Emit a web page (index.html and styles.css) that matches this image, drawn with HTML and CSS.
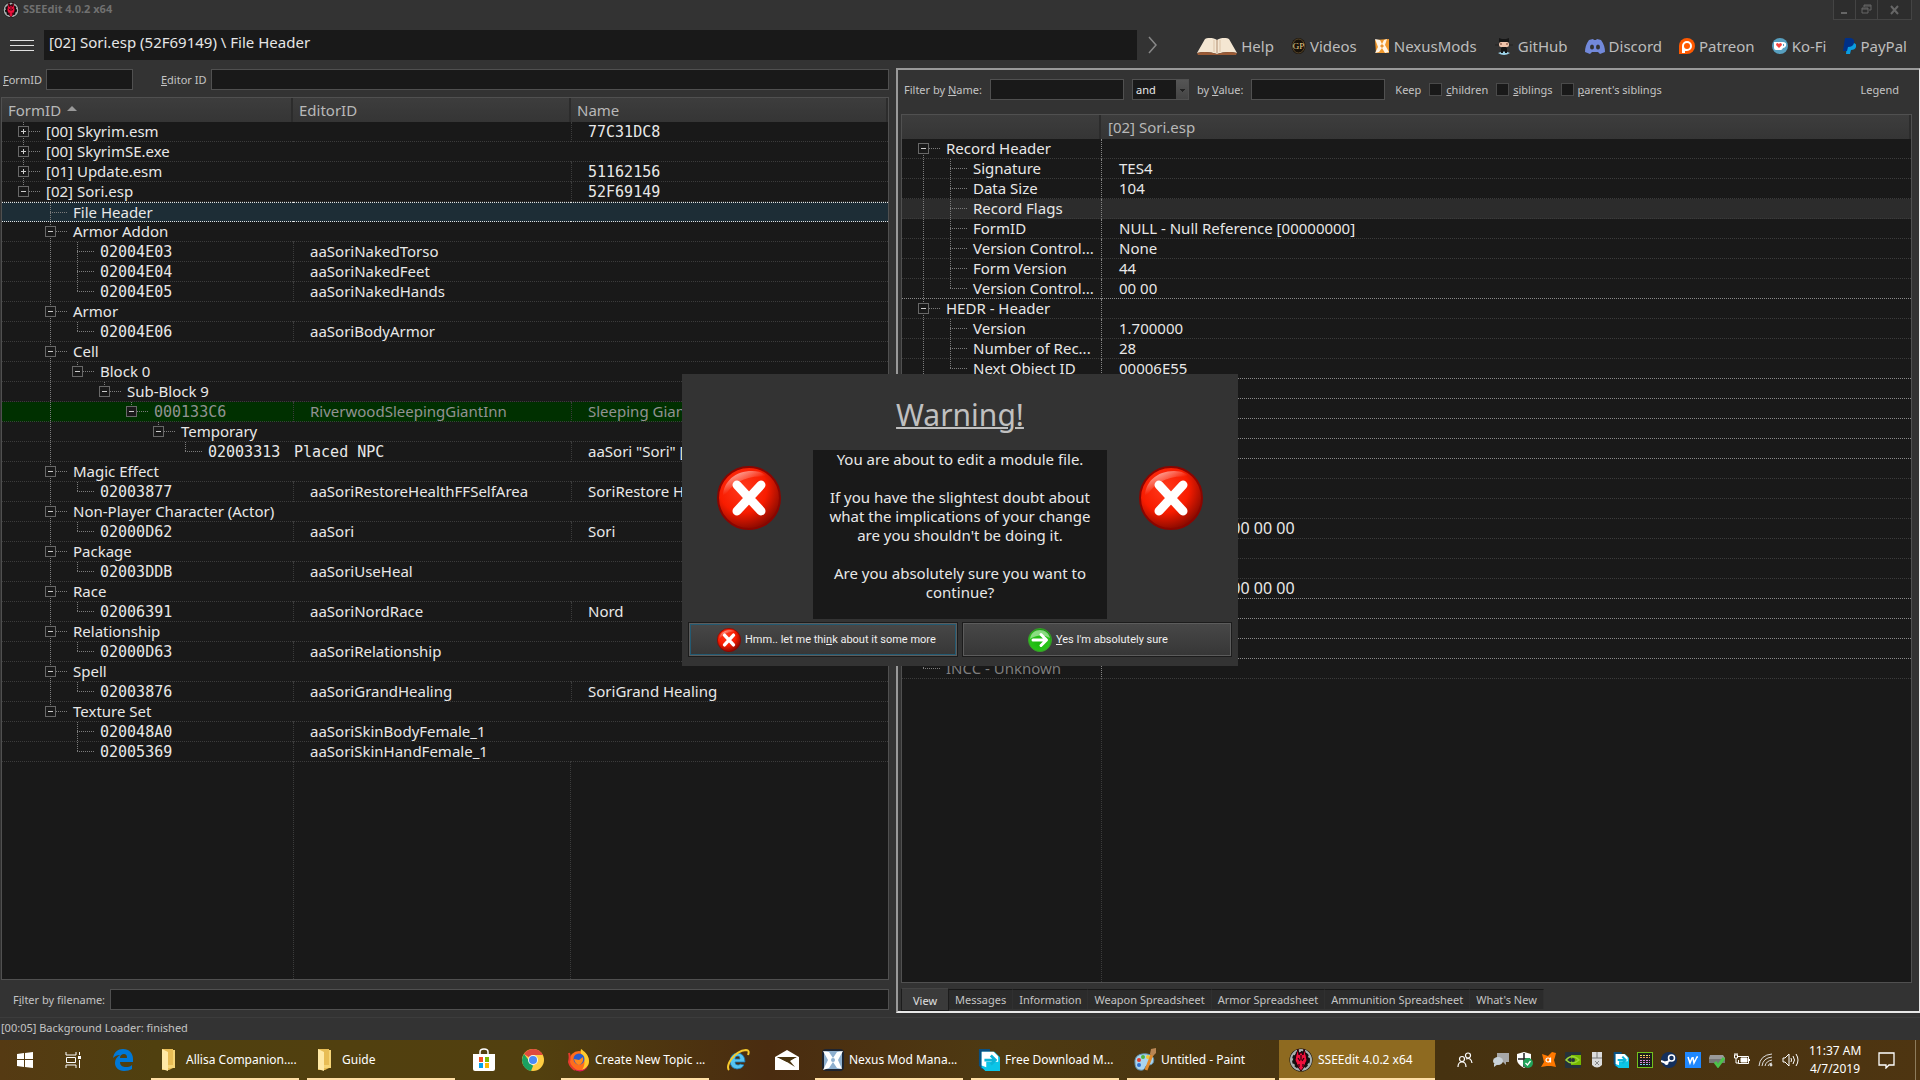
FILE: index.html
```html
<!DOCTYPE html>
<html lang="en">
<head>
<meta charset="utf-8">
<title>SSEEdit 4.0.2 x64</title>
<link rel="stylesheet" href="styles.css">
</head>
<body>
<svg class="defs" aria-hidden="true">
  <defs>
    <radialGradient id="red" cx="40%" cy="35%" r="70%"><stop offset="0" stop-color="#ff3a1c"/><stop offset=".55" stop-color="#f81c00"/><stop offset="1" stop-color="#7c0800"/></radialGradient>
    <linearGradient id="shine" x1="0" y1="0" x2=".6" y2=".8"><stop offset="0" stop-color="#fff" stop-opacity=".85"/><stop offset=".7" stop-color="#fff" stop-opacity="0"/></linearGradient>
    <radialGradient id="green" cx="45%" cy="60%" r="65%"><stop offset="0" stop-color="#19b80c"/><stop offset=".7" stop-color="#2cc41d"/><stop offset="1" stop-color="#0b7d05"/></radialGradient>
  </defs>
  <symbol id="i-error" viewBox="0 0 64 64">
    <circle cx="32" cy="32" r="31" fill="url(#red)" stroke="#8a0500" stroke-width="2"/>
    <path d="M6 33C5 16 18 5 35 5c8 0 13 3 16 6C32 8 14 16 6 33z" fill="url(#shine)"/>
    <path d="M20 19l24 26M44 19L20 45" stroke="#fff" stroke-width="9" stroke-linecap="round"/>
  </symbol>
  <symbol id="i-go" viewBox="0 0 24 24">
    <circle cx="12" cy="12" r="11.5" fill="url(#green)" stroke="#3a9a2c"/>
    <path d="M2 11C3 5 7 2 12 2s9 3 10 8C15 6 8 7 2 11z" fill="#fff" opacity=".45"/>
    <path d="M5 12h13M13 6.500l5.500 5.500-5.500 5.500" fill="none" stroke="#fff" stroke-width="3" stroke-linecap="round" stroke-linejoin="round"/>
  </symbol>
  <symbol id="i-sse" viewBox="0 0 24 24">
    <circle cx="12" cy="12" r="11.500" fill="#111"/>
    <circle cx="12" cy="12" r="9.500" fill="none" stroke="#a9b0b0" stroke-width="3"/>
    <circle cx="12" cy="12" r="7.500" fill="none" stroke="#111" stroke-width="3" stroke-dasharray="3 2"/>
    <path d="M9 1l1 6 2-3 2 3 1-6 2 6 1 5-3 7-3 4-3-4-3-7 1-5z" fill="#f0103c" stroke="#220008"/>
    <path d="M12 7v5M9 10l2 3M15 10l-2 3M10 16v3M14 16v3" stroke="#220008" stroke-width="1.200"/>
  </symbol>
  <symbol id="i-folder" viewBox="0 0 16 24"><path d="M1 1h11v19l-4 2H1z" fill="#e8bd55"/><path d="M1 1l6 3v19l-6-2z" fill="#ffe9a6"/><path d="M12 2h2v18H7v-3h5z" fill="#f6d576"/></symbol>
  <symbol id="i-fdm" viewBox="0 0 24 24"><path d="M1 0h12v22H4l-3-4z" fill="#0a4f80"/><path d="M4 3h14l6 6v15H8l-4-4z" fill="#0bc5e8"/><path d="M4 3h13l5 5v6H9v6l-5-2z" fill="#fff"/><path d="M7 12h12M14 7l5 5-5 5" fill="none" stroke="#0bb4d8" stroke-width="3"/></symbol>
  <symbol id="i-nexus" viewBox="0 0 16 16"><path d="M1 2l14-1v14L2 15z" fill="#f0982c"/><path d="M1 1l5 1 2 4 2-4 3-1-2 6 4 7-4 1-3-5-3 4-4 1 3-6z" fill="#fff4e4"/><path d="M6 8l2-2 2 2-2 2z" fill="#e8912d"/></symbol>
</svg>

<main class="app">
  <header class="titlebar">
    <svg class="i16"><use href="#i-sse"/></svg>
    <h1>SSEEdit 4.0.2 x64</h1>
    <div class="winctl">
      <button type="button" aria-label="Minimize"><svg width="10" height="10"><path d="M1 8h6" stroke="#666" stroke-width="2"/></svg></button>
      <button type="button" aria-label="Restore"><svg width="11" height="11"><path d="M3 3V1h7v5H8M1 4h6v5H1zM1 5h6M3 2h7" fill="none" stroke="#666"/></svg></button>
      <button type="button" class="wide" aria-label="Close"><svg width="10" height="10"><path d="M1 1l7 8M8 1L1 9" stroke="#666" stroke-width="2"/></svg></button>
    </div>
  </header>

  <nav class="toolbar">
    <button type="button" class="menu" aria-label="Menu"><span></span><span></span><span></span></button>
    <input class="path" aria-label="Path" value="[02] Sori.esp (52F69149) \ File Header" readonly>
    <button type="button" class="next" aria-label="Forward"><svg width="10" height="18"><path d="M1 1l7 8-7 8" fill="none" stroke="#888" stroke-width="1.500"/></svg></button>
    <div class="links">
      <a href="#help"><svg width="40" height="17" viewBox="0 0 40 17"><path d="M8 1C12-1 17 0 20 2c3-2 8-3 12-1l8 14c-7-2-14-1-20 1-6-2-13-3-20-1z" fill="#f4e6d2"/><path d="M0 15c7-2 14-1 20 1 6-2 13-3 20-1l-1 2H1z" fill="#9a5a35"/><path d="M20 2v13" stroke="#b08d70"/><path d="M17 2v12M23 2v12" stroke="#dcc3a7"/></svg>Help</a>
      <a href="#videos"><svg width="15" height="16" viewBox="0 0 15 16"><ellipse cx="7.500" cy="8" rx="7" ry="8" fill="#17110a"/><ellipse cx="7.500" cy="8" rx="6" ry="7" fill="none" stroke="#5b4829"/><text x="7.500" y="11" text-anchor="middle" class="gp">GP</text></svg>Videos</a>
      <a href="#nexus"><svg class="i16"><use href="#i-nexus"/></svg>NexusMods</a>
      <a href="#github"><svg width="20" height="17" viewBox="0 0 20 17"><path d="M5 0l3 1h4l3-1v7H5z" fill="#161616"/><rect x="5" y="4" width="10" height="5" rx="2" fill="#efc4ab"/><path d="M7 5v2M13 5v2" stroke="#6b3b2b"/><path d="M1 7h4M15 7h4" stroke="#222"/><path d="M8 9h4l1 6H7z" fill="#141414"/><path d="M4 15q6-3 12 0-6 4-12 0z" fill="#9ed4ea"/><path d="M8 10v5M12 10v5" stroke="#141414" stroke-width="2"/></svg>GitHub</a>
      <a href="#discord"><svg width="20" height="15" viewBox="0 0 20 15"><path d="M4 1L8 0l1 1h2l1-1 4 1c3 4 4 8 4 12l-5 2-2-2H7l-2 2-5-2C0 9 1 5 4 1z" fill="#7289da"/><ellipse cx="7" cy="8" rx="2" ry="2.500" fill="#333"/><ellipse cx="13" cy="8" rx="2" ry="2.500" fill="#333"/></svg>Discord</a>
      <a href="#patreon"><svg class="i16" viewBox="0 0 16 16"><path d="M0 8a8 8 0 1 1 8 8H0z" fill="#ff5900"/><path d="M3 15V8a5 5 0 1 1 5 5H6v2z" fill="#fff"/><circle cx="8" cy="8" r="3" fill="#ff5900"/></svg>Patreon</a>
      <a href="#kofi"><svg class="i16" viewBox="0 0 16 16"><circle cx="8" cy="8" r="8" fill="#579fbf"/><path d="M2 4h9q4 0 3 4-1 2-3 2-1 2-2 2H4q-2 0-2-2z" fill="#fff"/><path d="M11 6h1v2h-1z" fill="#579fbf"/><path d="M7 10L4 7q0-2 1.500-2L7 6l1-1q2 0 2 2z" fill="#f5433f"/></svg>Ko-Fi</a>
      <a href="#paypal"><svg width="13" height="16" viewBox="0 0 13 16"><path d="M4 5h7q3 1 2 4-1 3-5 3l-1 4H3z" fill="#0a9de0"/><path d="M2 0h6q4 1 3 5-1 4-6 4l-1 4H0z" fill="#003087"/></svg>PayPal</a>
    </div>
  </nav>

  <div class="panes">
    <section class="left">
      <form class="search">
        <label for="formid"><u>F</u>ormID</label><input id="formid" class="field short">
        <label for="editorid" class="gapl"><u>E</u>ditor ID</label><input id="editorid" class="field grow">
      </form>
      <div class="tree nav-tree">
        <table>
          <thead><tr><th>FormID <i class="sort"></i></th><th>EditorID</th><th>Name</th></tr></thead>
          <tbody>
            <tr><td><div class="node"><span class="g v x"><button type="button" class="plus" aria-label="Expand"></button></span>[00] Skyrim.esm</div></td><td></td><td class="mono">77C31DC8</td></tr>
            <tr><td><div class="node"><span class="g v x"><button type="button" class="plus" aria-label="Expand"></button></span>[00] SkyrimSE.exe</div></td><td></td><td></td></tr>
            <tr><td><div class="node"><span class="g v x"><button type="button" class="plus" aria-label="Expand"></button></span>[01] Update.esm</div></td><td></td><td class="mono">51162156</td></tr>
            <tr><td><div class="node"><span class="g e x"><button type="button" aria-label="Collapse"></button></span>[02] Sori.esp</div></td><td></td><td class="mono">52F69149</td></tr>
            <tr class="selected"><td><div class="node"><span class="g"></span><span class="g v x"></span>File Header</div></td><td></td><td></td></tr>
            <tr><td><div class="node"><span class="g"></span><span class="g v x"><button type="button" aria-label="Collapse"></button></span>Armor Addon</div></td><td></td><td></td></tr>
            <tr><td><div class="node mono"><span class="g"></span><span class="g v"></span><span class="g v x"></span>02004E03</div></td><td>aaSoriNakedTorso</td><td></td></tr>
            <tr><td><div class="node mono"><span class="g"></span><span class="g v"></span><span class="g v x"></span>02004E04</div></td><td>aaSoriNakedFeet</td><td></td></tr>
            <tr><td><div class="node mono"><span class="g"></span><span class="g v"></span><span class="g e x"></span>02004E05</div></td><td>aaSoriNakedHands</td><td></td></tr>
            <tr><td><div class="node"><span class="g"></span><span class="g v x"><button type="button" aria-label="Collapse"></button></span>Armor</div></td><td></td><td></td></tr>
            <tr><td><div class="node mono"><span class="g"></span><span class="g v"></span><span class="g e x"></span>02004E06</div></td><td>aaSoriBodyArmor</td><td></td></tr>
            <tr><td><div class="node"><span class="g"></span><span class="g v x"><button type="button" aria-label="Collapse"></button></span>Cell</div></td><td></td><td></td></tr>
            <tr><td><div class="node"><span class="g"></span><span class="g v"></span><span class="g e x"><button type="button" aria-label="Collapse"></button></span>Block 0</div></td><td></td><td></td></tr>
            <tr><td><div class="node"><span class="g"></span><span class="g v"></span><span class="g"></span><span class="g e x"><button type="button" aria-label="Collapse"></button></span>Sub-Block 9</div></td><td></td><td></td></tr>
            <tr class="override"><td><div class="node mono"><span class="g"></span><span class="g v"></span><span class="g"></span><span class="g"></span><span class="g e x"><button type="button" aria-label="Collapse"></button></span>000133C6</div></td><td>RiverwoodSleepingGiantInn</td><td>Sleeping Giant Inn</td></tr>
            <tr><td><div class="node"><span class="g"></span><span class="g v"></span><span class="g"></span><span class="g"></span><span class="g"></span><span class="g e x"><button type="button" aria-label="Collapse"></button></span>Temporary</div></td><td></td><td></td></tr>
            <tr><td><div class="node mono"><span class="g"></span><span class="g v"></span><span class="g"></span><span class="g"></span><span class="g"></span><span class="g"></span><span class="g e x"></span>02003313</div></td><td class="mono placed">Placed NPC</td><td>aaSori "Sori" [NPC_:02000D62]</td></tr>
            <tr><td><div class="node"><span class="g"></span><span class="g v x"><button type="button" aria-label="Collapse"></button></span>Magic Effect</div></td><td></td><td></td></tr>
            <tr><td><div class="node mono"><span class="g"></span><span class="g v"></span><span class="g e x"></span>02003877</div></td><td>aaSoriRestoreHealthFFSelfArea</td><td>SoriRestore Health</td></tr>
            <tr><td><div class="node"><span class="g"></span><span class="g v x"><button type="button" aria-label="Collapse"></button></span>Non-Player Character (Actor)</div></td><td></td><td></td></tr>
            <tr><td><div class="node mono"><span class="g"></span><span class="g v"></span><span class="g e x"></span>02000D62</div></td><td>aaSori</td><td>Sori</td></tr>
            <tr><td><div class="node"><span class="g"></span><span class="g v x"><button type="button" aria-label="Collapse"></button></span>Package</div></td><td></td><td></td></tr>
            <tr><td><div class="node mono"><span class="g"></span><span class="g v"></span><span class="g e x"></span>02003DDB</div></td><td>aaSoriUseHeal</td><td></td></tr>
            <tr><td><div class="node"><span class="g"></span><span class="g v x"><button type="button" aria-label="Collapse"></button></span>Race</div></td><td></td><td></td></tr>
            <tr><td><div class="node mono"><span class="g"></span><span class="g v"></span><span class="g e x"></span>02006391</div></td><td>aaSoriNordRace</td><td>Nord</td></tr>
            <tr><td><div class="node"><span class="g"></span><span class="g v x"><button type="button" aria-label="Collapse"></button></span>Relationship</div></td><td></td><td></td></tr>
            <tr><td><div class="node mono"><span class="g"></span><span class="g v"></span><span class="g e x"></span>02000D63</div></td><td>aaSoriRelationship</td><td></td></tr>
            <tr><td><div class="node"><span class="g"></span><span class="g v x"><button type="button" aria-label="Collapse"></button></span>Spell</div></td><td></td><td></td></tr>
            <tr><td><div class="node mono"><span class="g"></span><span class="g v"></span><span class="g e x"></span>02003876</div></td><td>aaSoriGrandHealing</td><td>SoriGrand Healing</td></tr>
            <tr><td><div class="node"><span class="g"></span><span class="g e x"><button type="button" aria-label="Collapse"></button></span>Texture Set</div></td><td></td><td></td></tr>
            <tr><td><div class="node mono"><span class="g"></span><span class="g"></span><span class="g v x"></span>020048A0</div></td><td>aaSoriSkinBodyFemale_1</td><td></td></tr>
            <tr><td><div class="node mono"><span class="g"></span><span class="g"></span><span class="g e x"></span>02005369</div></td><td>aaSoriSkinHandFemale_1</td><td></td></tr>
          </tbody>
        </table>
        <div class="rest"><span></span><span></span><span></span></div>
      </div>
      <form class="filename">
        <label for="fname">F<u>i</u>lter by filename:</label><input id="fname" class="field grow">
      </form>
    </section>

    <section class="right">
      <form class="filters">
        <label for="byname">Filter by <u>N</u>ame:</label><input id="byname" class="field mid">
        <select aria-label="Operator" class="field"><option>and</option></select>
        <label for="byvalue">by <u>V</u>alue:</label><input id="byvalue" class="field mid">
        <span class="keep">Keep</span>
        <label class="check"><input type="checkbox"><span><u>c</u>hildren</span></label>
        <label class="check"><input type="checkbox"><span><u>s</u>iblings</span></label>
        <label class="check"><input type="checkbox"><span><u>p</u>arent's siblings</span></label>
        <span class="legend">Legend</span>
      </form>
      <div class="tree view-tree">
        <table>
          <thead><tr><th></th><th>[02] Sori.esp</th></tr></thead>
          <tbody>
            <tr><td><div class="node"><span class="g s x"><button type="button" aria-label="Collapse"></button></span>Record Header</div></td><td></td></tr>
            <tr><td><div class="node"><span class="g v"></span><span class="g v x"></span>Signature</div></td><td>TES4</td></tr>
            <tr><td><div class="node"><span class="g v"></span><span class="g v x"></span>Data Size</div></td><td>104</td></tr>
            <tr class="hot"><td><div class="node"><span class="g v"></span><span class="g v x"></span>Record Flags</div></td><td></td></tr>
            <tr><td><div class="node"><span class="g v"></span><span class="g v x"></span>FormID</div></td><td>NULL - Null Reference [00000000]</td></tr>
            <tr><td><div class="node"><span class="g v"></span><span class="g v x"></span>Version Control...</div></td><td>None</td></tr>
            <tr><td><div class="node"><span class="g v"></span><span class="g v x"></span>Form Version</div></td><td>44</td></tr>
            <tr class="strong"><td><div class="node"><span class="g v"></span><span class="g e x"></span>Version Control...</div></td><td>00 00</td></tr>
            <tr><td><div class="node"><span class="g v x"><button type="button" aria-label="Collapse"></button></span>HEDR - Header</div></td><td></td></tr>
            <tr><td><div class="node"><span class="g v"></span><span class="g v x"></span>Version</div></td><td>1.700000</td></tr>
            <tr><td><div class="node"><span class="g v"></span><span class="g v x"></span>Number of Rec...</div></td><td>28</td></tr>
            <tr class="strong"><td><div class="node"><span class="g v"></span><span class="g e x"></span>Next Object ID</div></td><td>00006E55</td></tr>
            <tr class="strong"><td></td><td></td></tr>
            <tr class="strong"><td></td><td></td></tr>
            <tr class="strong"><td></td><td></td></tr>
            <tr class="strong"><td></td><td></td></tr>
            <tr><td></td><td></td></tr>
            <tr><td></td><td></td></tr>
            <tr><td></td><td></td></tr>
            <tr class="bytes"><td></td><td>00 00 00 00 00 00 00 00</td></tr>
            <tr><td></td><td></td></tr>
            <tr><td></td><td></td></tr>
            <tr class="strong bytes"><td></td><td>00 00 00 00 00 00 00 00</td></tr>
            <tr class="strong"><td></td><td></td></tr>
            <tr class="strong"><td></td><td></td></tr>
            <tr class="strong"><td></td><td></td></tr>
            <tr class="dim"><td><div class="node"><span class="g e x"></span>INCC - Unknown</div></td><td></td></tr>
          </tbody>
        </table>
        <div class="rest"><span></span><span></span></div>
      </div>
      <div class="tabs" role="tablist">
        <button type="button" role="tab" aria-selected="true">View</button>
        <button type="button" role="tab">Messages</button>
        <button type="button" role="tab">Information</button>
        <button type="button" role="tab">Weapon Spreadsheet</button>
        <button type="button" role="tab">Armor Spreadsheet</button>
        <button type="button" role="tab">Ammunition Spreadsheet</button>
        <button type="button" role="tab">What's New</button>
      </div>
    </section>
  </div>

  <footer class="status">[00:05] Background Loader: finished</footer>

  <div class="overlay">
    <div class="dialog" role="dialog" aria-labelledby="warn">
      <h2 id="warn">Warning!</h2>
      <div class="message">
        <svg class="big"><use href="#i-error"/></svg>
        <div class="text">
          <p>You are about to edit a module file.</p>
          <p>If you have the slightest doubt about<br>what the implications of your change<br>are you shouldn't be doing it.</p>
          <p>Are you absolutely sure you want to<br>continue?</p>
        </div>
        <svg class="big"><use href="#i-error"/></svg>
      </div>
      <div class="actions">
        <button type="button" class="default"><svg class="i24"><use href="#i-error"/></svg><span>Hmm.. let me thi<u>n</u>k about it some more</span></button>
        <button type="button"><svg class="i24"><use href="#i-go"/></svg><span><u>Y</u>es I'm absolutely sure</span></button>
      </div>
    </div>
  </div>
</main>

<footer class="taskbar">
  <button type="button" class="pin" aria-label="Start"><svg width="16" height="16"><path d="M0 2l7-1v6H0zM8 1l8-1v7H8zM0 8h7v7l-7-1zM8 8h8v8l-8-1z" fill="#fff"/></svg></button>
  <button type="button" class="pin" aria-label="Task View"><svg width="17" height="16"><path d="M1 0v3h10V0M1 16v-3h10v3M1.500 5.500h9v5h-9zM14.500 0v3M14.500 8v8" fill="none" stroke="#fff"/><path d="M13 4h3v3h-3z" fill="#fff"/></svg></button>
  <button type="button" class="pin" aria-label="Edge"><svg width="20" height="22" viewBox="0 0 20 22"><path d="M0 9C1 3 5 0 10 0c6 0 10 4 10 10v3H7c0 4 3 5 6 5 2 0 4 0 6-2v4c-2 1-5 2-8 2-6 0-9-4-9-8 0-4 2-6 5-8-3 0-5 1-7 3zm7 0h7c0-3-1-4-3-4S7 6 7 9z" fill="#0078d7"/></svg></button>
  <button type="button" class="task dir"><svg width="16" height="24"><use href="#i-folder"/></svg><span>Allisa Companion....</span></button>
  <button type="button" class="task dir"><svg width="16" height="24"><use href="#i-folder"/></svg><span>Guide</span></button>
  <button type="button" class="pin" aria-label="Store"><svg width="22" height="24"><path d="M7 7V4q0-3 4-3t4 3v3" fill="none" stroke="#fff" stroke-width="1.500"/><path d="M0 6h22v15q0 2-2 2H2q-2 0-2-2z" fill="#fff"/><path d="M6 9h4v5H6z" fill="#f25022"/><path d="M12 9h4v5h-4z" fill="#7fba00"/><path d="M6 15h4v5H6z" fill="#00a4ef"/><path d="M12 15h4v5h-4z" fill="#ffb900"/></svg></button>
  <button type="button" class="pin" aria-label="Chrome"><svg width="22" height="22"><circle cx="11" cy="11" r="11" fill="#ffcd42"/><path d="M11 11L2 5a11 11 0 0 1 19 1H11z" fill="#de4b3e"/><path d="M2 5l6 8 3 4-2 5A11 11 0 0 1 2 5z" fill="#1aa260"/><circle cx="11" cy="11" r="5" fill="#f4f4f4"/><circle cx="11" cy="11" r="4" fill="#4a8af4"/></svg></button>
  <button type="button" class="task"><svg width="22" height="24"><circle cx="11" cy="13" r="10" fill="#ff6d1c"/><path d="M13 1c3 2 8 6 8 12 0 5-4 8-7 9 2-3 4-8 1-13-2-3-3-5-2-8z" fill="#ffcb2d"/><path d="M4 19c5 5 12 4 16-1-3 7-12 7-16 1z" fill="#e21b5a"/><path d="M1 5c1 3 1 5 0 9 1 4 3 6 6 8" fill="none" stroke="#e93a2e" stroke-width="2"/><circle cx="11" cy="11" r="5.500" fill="#2a5ccc"/><path d="M6 11l5 1 4-3q1 6-4 8-4-1-5-6z" fill="#ff8a1c"/></svg><span>Create New Topic ...</span></button>
  <button type="button" class="pin" aria-label="Internet Explorer"><svg width="24" height="24"><path d="M18 17q-2 4-7 4-7-1-7-8 1-8 8-8 7 1 7 9H9q0 3 3 3 2 0 2-1zM9 11h5q0-3-2-3-3 0-3 3z" fill="#56c4f0" stroke="#1b7ab5" stroke-width=".800"/><path d="M3 22C-1 18 8 3 20 2q4 0 2 5" fill="none" stroke="#f7c92c" stroke-width="2"/></svg></button>
  <button type="button" class="pin" aria-label="Mail"><svg width="24" height="20"><path d="M0 7l12-7 12 7v13H0z" fill="#fff"/><path d="M2 7h20l-10 5z" fill="#4a3410"/><path d="M2 7l10 5 8 5-5-6 6-4z" fill="#4a3410"/></svg></button>
  <button type="button" class="task"><svg width="22" height="22"><rect width="22" height="22" rx="4" fill="#1e2430"/><rect x="2" y="2" width="18" height="18" rx="2" fill="#8fb0cf"/><path d="M1 2l6 1 4 6 4-6 6-1-5 9 4 9-5-1-4-6-4 6-6 2 5-10z" fill="#fff"/><circle cx="11" cy="11" r="2" fill="#8fb0cf"/></svg><span>Nexus Mod Mana...</span></button>
  <button type="button" class="task"><svg width="22" height="24"><use href="#i-fdm"/></svg><span>Free Download M...</span></button>
  <button type="button" class="task"><svg width="22" height="24"><path d="M1 15C0 8 6 5 13 6c6 1 8 5 6 9-2 3-5 1-7 3-1 2-2 5-6 4-3 0-5-3-5-7z" fill="#a9d4ee" stroke="#5e8fb0"/><circle cx="5" cy="12" r="2" fill="#e13c2e"/><circle cx="9" cy="9" r="2" fill="#4db33f"/><circle cx="14" cy="9" r="2" fill="#f4c430"/><circle cx="5" cy="17" r="2" fill="#2d6fd0"/><path d="M19 4l-7 18" stroke="#e08a2b" stroke-width="3"/><path d="M17 1l5-1v5l-3 3-3-2z" fill="#b98552"/></svg><span>Untitled - Paint</span></button>
  <button type="button" class="task active"><svg width="24" height="24"><use href="#i-sse"/></svg><span>SSEEdit 4.0.2 x64</span></button>

  <div class="tray">
    <svg class="people" width="16" height="16" fill="none" stroke="#fff" stroke-width="1.200"><circle cx="5" cy="7" r="2.500"/><path d="M1 15q0-5 4-5t4 5"/><circle cx="11" cy="3.500" r="2.500"/><path d="M9 7q5-2 6 4"/></svg>
    <svg width="16" height="16"><path d="M4 1h12v9h-3v3l-3-3H4z" fill="#a8a8a8"/><ellipse cx="5" cy="9" rx="5" ry="4" fill="#c9d2d8"/><path d="M1 12v3l4-3z" fill="#c9d2d8"/></svg>
    <svg width="16" height="16"><path d="M7 0l7 2v6q0 4-7 8-7-4-7-8V2z" fill="#fff"/><path d="M7 1v14M1 7h12" stroke="#222" stroke-width="1.500"/><circle cx="11" cy="11" r="5" fill="#22a45a"/><path d="M8.500 11l2 2 3-4" fill="none" stroke="#fff" stroke-width="1.300"/></svg>
    <svg width="16" height="16"><path d="M1 2l6 2 4-4 4 1-1 4-1 3 2 7-5-1-4 0-6 1 3-5z" fill="#ff7800"/><circle cx="7" cy="8" r="2" fill="none" stroke="#fff" stroke-width="1.200"/><path d="M9.500 5.500v5" stroke="#fff" stroke-width="1.200"/></svg>
    <svg width="16" height="16"><rect width="16" height="16" rx="1" fill="#26323a"/><path d="M6 3h10v10H6z" fill="#76b900"/><path d="M1 8q6-7 13 0-7 6-13 0z" fill="none" stroke="#9ad43a" stroke-width="1.500"/><circle cx="8" cy="8" r="2" fill="#26323a"/></svg>
    <svg width="16" height="16"><path d="M3 0h10v13q-5 5-10 0z" fill="#dcdcdc"/><path d="M8 0v6M3 6h10" stroke="#777"/><path d="M6 9l4 4M10 9l-4 4" stroke="#888"/></svg>
    <svg width="16" height="16"><use href="#i-fdm"/></svg>
    <svg width="16" height="16"><rect x=".500" y=".500" width="15" height="15" fill="#1c1c1c" stroke="#71c21c"/><path d="M3 3.500h10" stroke="#f2e45c" stroke-dasharray="2 1"/><path d="M3 5.500h10" stroke="#f0a05c" stroke-dasharray="2 1"/><path d="M3 8.500h10M3 10.500h10" stroke="#d58ae0" stroke-dasharray="2 1"/><path d="M3 12.500h10" stroke="#79d2f0" stroke-dasharray="2 1"/></svg>
    <svg width="16" height="16"><circle cx="8" cy="8" r="8" fill="#14305c"/><circle cx="10.500" cy="6" r="3" fill="none" stroke="#fff" stroke-width="1.500"/><path d="M0 9l5 2 4-3" fill="none" stroke="#fff" stroke-width="2"/><circle cx="5.500" cy="11" r="2" fill="#fff"/></svg>
    <svg width="16" height="16"><path d="M0 0h16v16H0z" fill="#1e88ff"/><path d="M3 5l2 6 2-5h1l1 5 3-6h1M8 5v2" fill="none" stroke="#fff" stroke-width="1.500"/></svg>
    <svg width="16" height="16"><path d="M1 3h13l2 3v5H0V6z" fill="#9a9a9a"/><path d="M0 7h16v4H0z" fill="#777"/><path d="M6 10l3 4 6-8" fill="none" stroke="#4cc24a" stroke-width="3"/></svg>
    <svg width="17" height="16" fill="none" stroke="#fff"><path d="M5 4.500h10.500v7H5.500V8M16.500 7v2M1 3h4M1.500 3v3h3V3M3 6v5h3M2 1v2M4 1v2"/><path d="M8 6h6v4H8z" fill="#fff"/></svg>
    <svg width="16" height="16" fill="none" stroke="#ddd"><path d="M1 14Q2 3 14 2M4 14Q5 6 14 5M7 14q1-5 7-6M10 14q1-3 4-3"/><circle cx="13" cy="13" r="1" fill="#fff"/></svg>
    <svg width="17" height="16" fill="none" stroke="#fff"><path d="M1 6h2l4-4v12l-4-4H1zM9 6q1 2 0 4M11 4q3 4 0 8M14 2q4 6 0 12"/></svg>
    <time>11:37 AM<br>4/7/2019</time>
    <svg class="note" width="17" height="17" fill="none" stroke="#fff"><path d="M1 1h15v12h-5l-3 3v-3H1z" stroke-width="1.300"/></svg>
    <span class="desk"></span>
  </div>
</footer>
</body>
</html>
```
FILE: styles.css
```css
* { box-sizing: border-box; }

body {
  margin: 0;
  min-height: 100vh;
  display: flex;
  flex-direction: column;
  background: #333;
  color: #c4c4c4;
  font: 11px/16px "Noto Sans", "Open Sans", sans-serif;
}

button, input, select { font: inherit; color: inherit; margin: 0; border-radius: 0; }
button { padding: 0; border: 0; background: none; }
svg { flex: none; display: block; }
.defs { position: absolute; width: 0; height: 0; }
.i16 { width: 16px; height: 16px; }
.i24 { width: 24px; height: 24px; }

.app { flex: 1; display: flex; flex-direction: column; position: relative; }

/* Title bar */
.titlebar { display: flex; height: 30px; padding: 0 8px 0 3px; gap: 4px; }
.titlebar > svg { margin-top: 2px; }
.titlebar h1 { margin: 0; flex: 1; font-size: 11px; line-height: 18px; color: #707070; }
.winctl { display: flex; height: 20px; border: 1px solid #444; border-top: 0; }
.winctl button { width: 22px; display: grid; place-items: center; background: #2d2d2d; border-right: 1px solid #444; }
.winctl .wide { width: 33px; border-right: 0; }

/* Toolbar */
.toolbar { display: flex; align-items: center; height: 30px; padding: 0 13px 0 10px; margin-bottom: 8px; }
.menu { width: 24px; display: grid; gap: 4px; margin-right: 10px; }
.menu span { height: 1px; background: #e0e0e0; }
.path { flex: 1; min-width: 0; height: 30px; padding: 0 5px 6px; border: 0; background: #191919; color: #e6e6e6; font-size: 15px; }
.next { padding: 0 39px 0 11px; }
.links { display: flex; gap: 17px; padding-top: 2px; }
.links a { display: flex; align-items: center; gap: 4px; color: #bdbdbd; text-decoration: none; font-size: 15px; line-height: 20px; }
.gp { font: 9px "Liberation Serif", serif; fill: #e8d28e; }

/* Panes */
.panes { flex: 1; display: grid; grid-template-columns: minmax(0, 7fr) minmax(0, 8fr); }
.left { display: flex; flex-direction: column; padding: 1px 7px 7px 1px; }
.field { height: 21px; min-width: 0; padding: 0 3px; border: 1px solid #505050; background: #191919; }
.grow { flex: 1; }
.short { width: 87px; }
.mid { width: 134px; }
.search { display: flex; align-items: center; gap: 4px; height: 21px; margin: 0 0 7px 2px; }
.gapl { margin-left: 24px; }
.filename { display: flex; align-items: center; gap: 5px; height: 21px; padding-left: 12px; margin-top: 9px; }

/* Trees */
.tree { flex: 1; display: flex; flex-direction: column; border: 1px solid #505050; background: #191919; color: #e8e8e8; font-size: 15px; line-height: 19px; }
table { width: 100%; table-layout: fixed; border-collapse: separate; border-spacing: 0; }
th { height: 24px; padding: 1px 0 0 6px; text-align: left; font-weight: 400; color: #b8b8b8; background: linear-gradient(#3d3d3d, #353535); border-right: 2px solid #2c2c2c; }
th:nth-child(1) { width: 291px; }
th:nth-child(2) { width: 278px; }
th:last-child { width: auto; }
.view-tree th { padding-left: 7px; }
.view-tree th:nth-child(1) { width: 199px; }
.sort { display: inline-block; margin: 0 0 5px 2px; border: 5px solid transparent; border-top: 0; border-bottom-color: #999; }
td { height: 20px; padding: 0; border-bottom: 1px dotted #3c3c3c; white-space: nowrap; overflow: hidden; }
td + td { padding-left: 17px; }
.nav-tree td + td:not(:empty) { padding-left: 16px; border-left: 1px dotted #3c3c3c; }
.nav-tree td.placed:not(:empty) { padding-left: 1px; border-left: 0; }
.view-tree td + td { border-left: 1px dotted #858585; }
.mono { font-family: "DejaVu Sans Mono", monospace; }
td.mono { padding-top: 1px; line-height: 18px; }
.node { display: flex; height: 19px; padding-left: 8px; }
.node.mono { line-height: 21px; }
.g { flex: none; width: 27px; height: 20px; }
.x { width: 31px; margin-right: 5px; }
.v, .e, .s, .x { background-repeat: no-repeat; }
.v { background-image: repeating-linear-gradient(#7c7c7c 0 1px, transparent 1px 2px); background-size: 1px 20px; background-position: 13px 0; }
.x {
  background-image: repeating-linear-gradient(#7c7c7c 0 1px, transparent 1px 2px), repeating-linear-gradient(90deg, #7c7c7c 0 1px, transparent 1px 2px);
  background-size: 1px 20px, 18px 1px;
  background-position: 13px 0, 13px 9px;
}
.e { background-size: 1px 10px, 18px 1px; }
.s { background-position: 13px 10px, 13px 9px; }
.node button { display: block; width: 11px; height: 11px; margin: 4px 0 0 8px; border: 1px solid #686868; background: linear-gradient(#ccc, #ccc) center / 5px 1px no-repeat #191919; }
.node .plus { background: linear-gradient(#ccc, #ccc) center / 5px 1px no-repeat, linear-gradient(#ccc, #ccc) center / 1px 5px no-repeat #191919; }
.selected td { background: #1d2d36; border-top: 1px dotted #e0e0e0; border-bottom: 1px dotted #e0e0e0; }
.selected .node { height: 18px; line-height: 18px; }
.override { background: #003000; color: #929292; }
.strong td { border-bottom-color: #8a8a8a; }
.hot { background: #2c2c2c; }
.dim { color: #7e7e7e; }
.bytes { font-size: 16px; }
.rest { flex: 1; display: grid; grid-template-columns: 291px 277px 1fr; }
.view-tree .rest { grid-template-columns: 199px 1fr; }
.rest span + span { border-left: 1px dotted #3c3c3c; }

/* Record view */
.right { display: flex; flex-direction: column; margin-bottom: 4px; padding-left: 3px; border: 2px solid #e8e8e8; border-top-color: #999; border-left-color: #999; border-right-width: 1px; }
.filters { display: flex; align-items: center; height: 21px; margin: 9px 0 14px 3px; gap: 8px; }
.filters select { width: 57px; height: 21px; appearance: none; border-color: #505050; color: #e8e8e8; background: linear-gradient(90deg, #191919 43px, transparent 43px), conic-gradient(from 315deg at 50% 55%, #222 90deg, transparent 0) 46px 9px / 7px 5px no-repeat, linear-gradient(#555, #444); }
.keep { margin-left: 2px; }
.check { display: flex; align-items: center; gap: 4px; }
.check input { appearance: none; width: 13px; height: 13px; border: 1px solid #4a4a4a; background: #191919; }
.legend { margin: 0 20px 0 auto; }
.view-tree { margin-right: 7px; }
.tabs { display: flex; align-items: flex-start; height: 23px; margin-top: 5px; }
.tabs button { height: 20px; margin-top: 1px; padding: 0 6px; background: #2b2b2b; border-top: 1px solid #191919; border-right: 1px solid #303030; }
.tabs button[aria-selected="true"] { height: 23px; margin-top: 0; padding: 2px 11px 0; background: #3a3a3a; color: #e0e0e0; border: 1px solid #1c1c1c; border-top-color: #444; }

.status { height: 23px; padding: 2px 1px; border-top: 1px solid #3c3c3c; }

/* Warning dialog */
.overlay { position: absolute; inset: 0; display: grid; place-items: center; }
.dialog { width: 556px; padding: 20px 6px 9px; background: #333; }
.dialog h2 { margin: 0 0 14px; text-align: center; font-size: 30px; line-height: 42px; font-weight: 400; text-decoration: underline; text-decoration-thickness: 2px; color: #c0c0c0; }
.message { display: flex; justify-content: space-between; padding: 0 29px; }
.big { width: 64px; height: 64px; margin-top: 16px; }
.text { width: 294px; height: 169px; background: #191919; color: #e8e8e8; text-align: center; font-size: 15px; line-height: 19px; white-space: nowrap; }
.text p { margin: 0 0 19px; }
.actions { display: grid; grid-template-columns: 1fr 1fr; gap: 4px; margin-top: 3px; }
.actions button { display: flex; align-items: center; height: 35px; gap: 4px; padding-left: 28px; color: #f0f0f0; font-family: Roboto, sans-serif; white-space: nowrap; background: linear-gradient(#484848, #363636); border: 1px solid #1c1c1c; box-shadow: inset 0 0 0 1px #5c5c5c; }
.actions .default { box-shadow: inset 0 0 0 1px #5c5c5c, inset 0 0 0 2px #235a72; }
.actions button + button { padding-left: 65px; }

/* Taskbar */
.taskbar { display: flex; height: 40px; font-size: 12px; background: linear-gradient(90deg, #553a13, #50400f 8%, #52400f 28%, #4a2c10 40%, #4e3a12 52%, #463210 75%, #4e3511); color: #fff; }
.pin { width: 49px; display: grid; place-items: center; }
.task { width: 156px; display: flex; align-items: center; gap: 5px; padding: 0 4px 0 11px; background: linear-gradient(#ffdfa5, #ffdfa5) 4px 38px / 148px 2px no-repeat; white-space: nowrap; }
.task.dir { padding-left: 14px; gap: 9px; }
.task.active { padding-left: 10px; background: linear-gradient(#ffdfa5, #ffdfa5) 0 38px / 100% 2px no-repeat, #8e6a20; }
.tray { flex: 1; display: flex; align-items: center; justify-content: flex-end; gap: 8px; }
.people { margin-right: 12px; }
.tray time { width: 52px; text-align: center; line-height: 18px; margin: 0 9px 0 2px; white-space: nowrap; }
.note { margin-right: 12px; }
.desk { width: 5px; height: 40px; border-left: 1px solid #8d7c5c; }
```
